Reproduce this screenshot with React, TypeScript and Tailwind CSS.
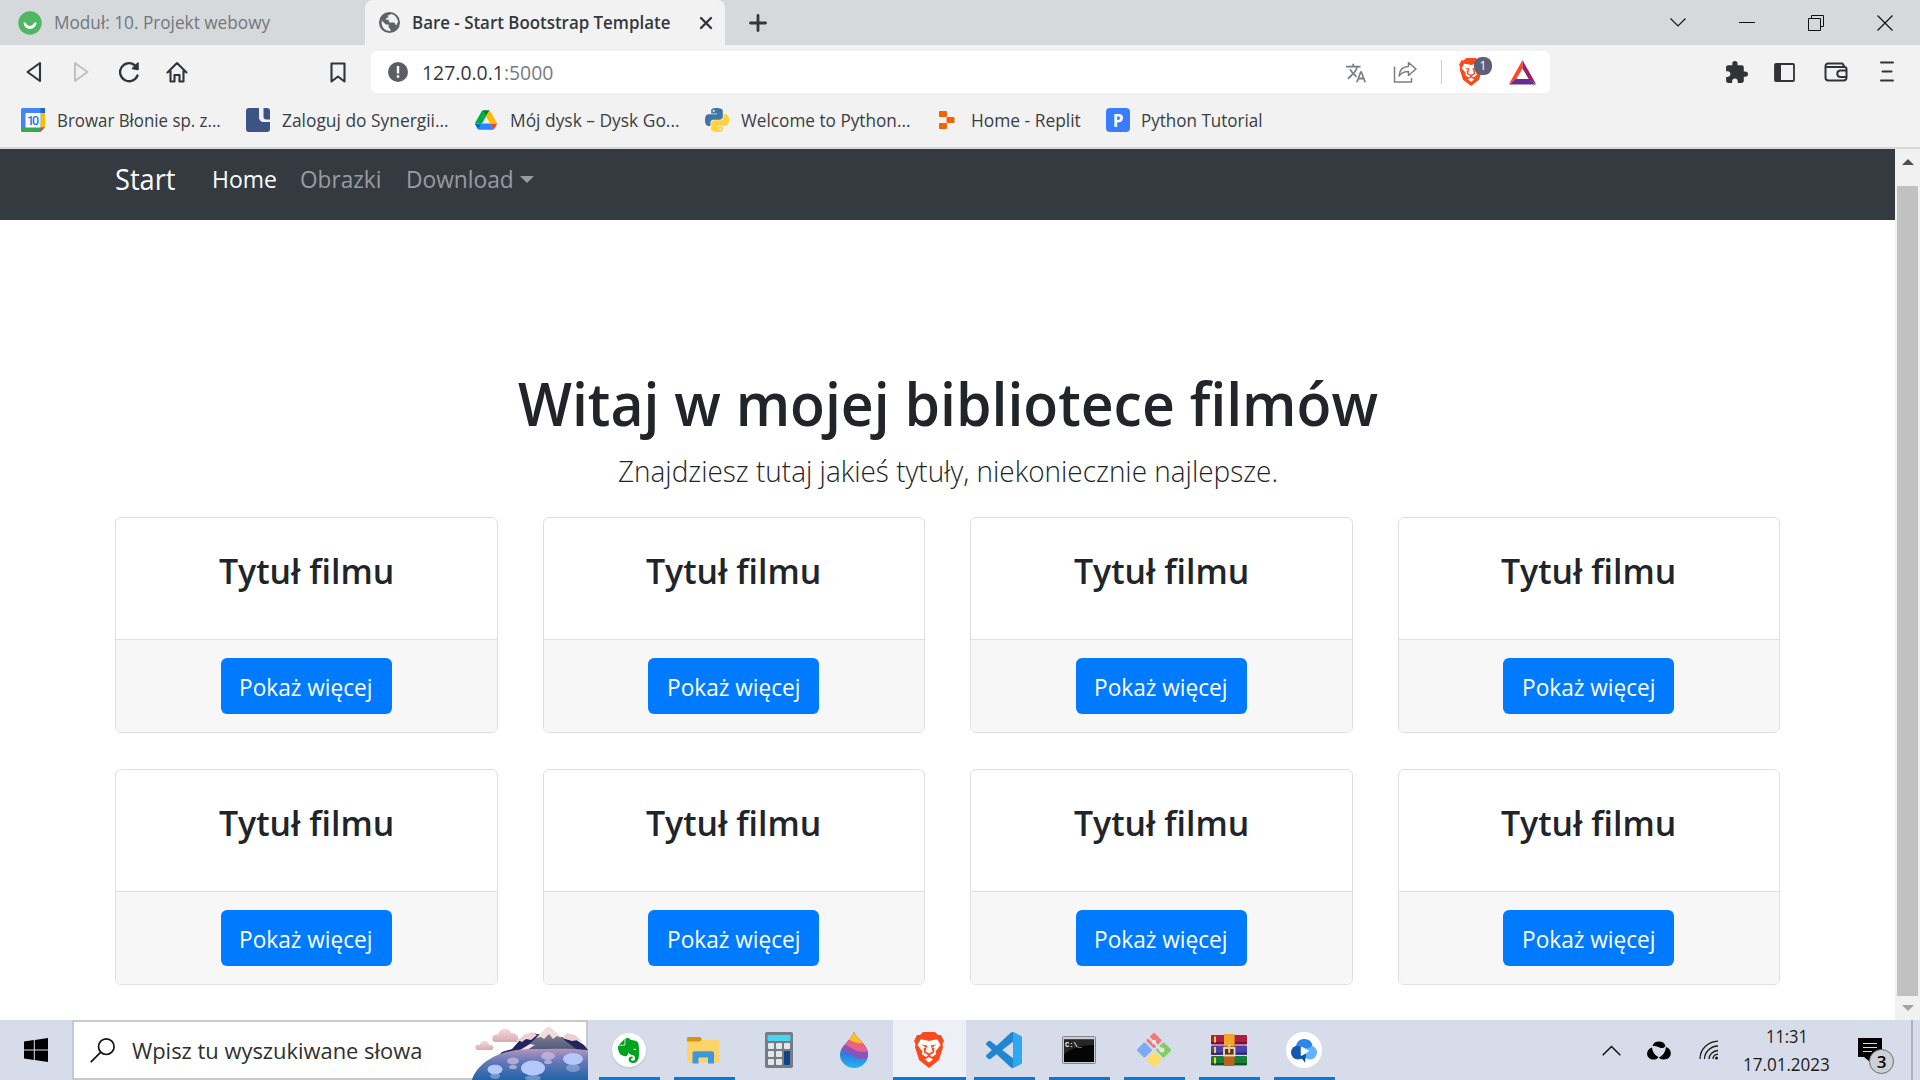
import { useLayoutEffect, useRef, useState } from 'react';
import type { ReactNode } from 'react';
import { SiEvernote } from 'react-icons/si';
import { MdExtension, MdTranslate } from 'react-icons/md';

/* Single-line label condensed or widened to occupy exactly `w` pixels. */
function Fit({ w, className = '', children }: { w: number; className?: string; children: ReactNode }) {
  const ref = useRef<HTMLSpanElement>(null);
  const [k, setK] = useState(1);
  useLayoutEffect(() => {
    if (ref.current) setK(w / ref.current.offsetWidth);
  }, [w]);
  return (
    <span className={`inline-block whitespace-nowrap ${className}`} style={{ width: w }}>
      <span ref={ref} className="inline-block origin-left whitespace-nowrap" style={{ transform: `scaleX(${k})` }}>
        {children}
      </span>
    </span>
  );
}

function BraveLion({ className }: { className: string }) {
  return (
    <svg className={className} viewBox="0 0 30 36" preserveAspectRatio="none">
      <path d="M9 0h12l3 3h3l3 6-1.500 3L29 15l-4 13L15 36 5 28 1 15l.5-3L0 9l3-6h3z" fill="#fb4a1f" />
      <path d="M6.500 7.500l4.500.5 4 1 4-1 4.500-.5 3 5.500-5 6.500.8 2.500-4.300 3-3-2.500-3 2.500-4.300-3 .8-2.500-5-6.500z" fill="#fff" />
      <path d="M7.500 12.500l6 1-1 2.500zM22.500 12.500l-6 1 1 2.500zM12.500 15.500l-1 4 3.500 2 3.500-2-1-4 3 .5-.5 4.500-3 2-2 1.200-2-1.200-3-2-.5-4.500z" fill="#fb4a1f" />
      <path d="M15 25l4 2.500-4 3-4-3z" fill="#fff" />
    </svg>
  );
}

function TabStrip() {
  return (
    <div className="flex h-[45px] bg-[#d5d9dc]">
      <div className="flex w-[365px] items-center pl-[18px]">
        <svg width="24" height="24" viewBox="0 0 24 24">
          <circle cx="12" cy="12" r="11.700" fill="#4fb761" />
          <path d="M5.500 11.500c.5 8.500 12.500 8.500 13 0-2.500-1-3 3.500-6.500 3.500s-4-4.500-6.500-3.500z" fill="#fff" />
        </svg>
        <Fit w={216} className="ml-3 text-[18px] text-[#72777b]">Moduł: 10. Projekt webowy</Fit>
      </div>
      <div className="flex w-[360px] items-center rounded-t-lg bg-[#f2f2f2] pl-[13px]">
        <svg width="23" height="23" viewBox="0 0 24 24">
          <circle cx="12" cy="12" r="11" fill="#5f6368" />
          <path d="M4 10l4 4h3v3l2 2v2C7 21 3 17 4 10zM10 5l4-2c4 1 6 4 7 8l-2 4-2-3h-5l-1-3h-3l1-2h2z" fill="#f2f2f2" />
        </svg>
        <Fit w={258} className="ml-[11px] text-[18px] font-semibold text-[#34383c]">Bare - Start Bootstrap Template</Fit>
        <svg className="ml-[29px]" width="14" height="14" viewBox="0 0 14 14" stroke="#33373a" strokeWidth="2.400" strokeLinecap="round">
          <path d="M2 2l10 10M12 2L2 12" />
        </svg>
      </div>
      <div className="flex flex-1 items-center">
        <svg className="ml-6" width="18" height="18" viewBox="0 0 18 18" stroke="#33373a" strokeWidth="2.800" strokeLinecap="round">
          <path d="M9 1.500v15M1.500 9h15" />
        </svg>
      </div>
      <div className="flex items-center gap-[53px] pr-[27px] text-black">
        <svg width="16" height="16" viewBox="0 0 16 16" fill="none" stroke="#111" strokeWidth="1.100"><path d="M.5 3.500L8 11l7.500-7.500" /></svg>
        <svg width="16" height="16" viewBox="0 0 16 16"><path d="M0 7h16v1H0z" fill="#111" /></svg>
        <svg width="16" height="16" viewBox="0 0 16 16" fill="none" stroke="#111"><path d="M.5 3.500h12v12h-12zM3.500 3.500v-3h12v11h-3" /></svg>
        <svg width="16" height="16" viewBox="0 0 16 16" stroke="#111" strokeWidth="1.200"><path d="M.5.5l15 15M15.500.5l-15 15" /></svg>
      </div>
    </div>
  );
}

function Toolbar() {
  return (
    <div className="flex h-[54px] items-center bg-[#f2f2f2]">
      <div className="flex w-[371px] items-center pl-[24px]">
        <svg width="20" height="22" viewBox="0 0 20 22" fill="none" stroke="#303437" strokeWidth="2.100" strokeLinejoin="round"><path d="M16 2v18L3.500 11z" /></svg>
        <svg className="ml-[28px]" width="20" height="22" viewBox="0 0 20 22" fill="none" stroke="#bfc1c3" strokeWidth="2.100" strokeLinejoin="round"><path d="M3 2v18l12.500-9z" /></svg>
        <svg className="ml-[26px]" width="22" height="22" viewBox="0 0 22 22" fill="none" stroke="#303437" strokeWidth="2.300" strokeLinecap="round">
          <path d="M19.500 14.500A9 9 0 1 1 16.500 4" />
          <path d="M14.500 7.500L20 2v6.500z" fill="#303437" strokeWidth="1.500" strokeLinejoin="round" />
        </svg>
        <svg className="ml-[26px]" width="22" height="22" viewBox="0 0 22 22" fill="none" stroke="#303437" strokeWidth="2.100" strokeLinecap="round" strokeLinejoin="round">
          <path d="M1.500 11.500L11 2l9.500 9.500M4.500 9.500V20.500H8.500V14h5v6.500h4V9.500" />
        </svg>
        <svg className="ml-[141px]" width="18" height="22" viewBox="0 0 18 22" fill="none" stroke="#303437" strokeWidth="2.100" strokeLinejoin="round"><path d="M2.500 2.500h13v18L9 15.500l-6.500 5z" /></svg>
      </div>
      <div className="flex h-[42px] w-[1179px] items-center rounded-md bg-white pl-[17px]">
        <svg width="20" height="20" viewBox="0 0 20 20"><circle cx="10" cy="10" r="10" fill="#5b5f63" /><path d="M8.800 4h2.400v7.500H8.800zM8.800 13.300h2.400v2.400H8.800z" fill="#fff" /></svg>
        <Fit w={131} className="ml-[14px] pt-px text-[20px] text-[#34383c]">127.0.0.1<span className="text-[#777b7f]">:5000</span></Fit>
        <MdTranslate className="ml-[792px] mt-px h-[22px] w-[22px] text-[#7b7d80]" />
        <svg className="ml-[26px]" width="24" height="22" viewBox="0 0 24 22" fill="none" stroke="#7b7d80" strokeWidth="1.500" strokeLinejoin="round">
          <path d="M1.500 5.500v15.500h17v-4M6 15c.5-6 3.500-9.500 9.500-9.500V1.500l7.500 6.500-7.500 6.500V10.500c-4 0-7 1-9.500 4.500z" />
        </svg>
        <div className="ml-[24px] h-6 w-px bg-[#cfcfcf]" />
        <div className="relative ml-[17px] h-[28px] w-[34px]">
          <BraveLion className="h-[28px] w-[24px]" />
          <div className="absolute left-[15px] top-[-1px] flex h-[18px] w-[18px] items-center justify-center rounded-[8px] bg-[#5e6174] text-[12px] leading-none text-white">1</div>
        </div>
        <svg className="ml-[16px]" width="27" height="25" viewBox="0 0 27 25">
          <path d="M13.500 0L0 24l7-4.500 6.500-11z" fill="#ff4724" />
          <path d="M13.500 0L27 24l-7-4.500-6.500-11z" fill="#9e1f63" />
          <path d="M0 24.500h27l-7-5.500H7z" fill="#662d91" />
        </svg>
      </div>
      <div className="flex flex-1 items-center justify-end pr-[26px] text-[#303437]">
        <MdExtension className="h-[25px] w-[25px]" />
        <svg className="ml-[25px]" width="21" height="19" viewBox="0 0 21 19"><rect x="1" y="1" width="19" height="17" rx="1" fill="none" stroke="#303437" strokeWidth="1.800" /><path d="M1 1h6v17H1z" fill="#303437" /></svg>
        <svg className="ml-[29px]" width="24" height="20" viewBox="0 0 24 20" fill="none" stroke="#303437" strokeWidth="2" strokeLinejoin="round">
          <path d="M1.500 4v11.500a3 3 0 0 0 3 3h15a3 3 0 0 0 3-3V7a2 2 0 0 0-2-2h-18a1 1 0 0 1-1-1 2.500 2.500 0 0 1 2.500-2.500h14.500L20.500 5M22 8.500h-6a3.300 3.300 0 0 0 0 6.500h6" />
        </svg>
        <svg className="ml-[32px]" width="14" height="22" viewBox="0 0 14 22" stroke="#303437" strokeWidth="2" strokeLinecap="round"><path d="M1 1.500h12M2.500 10.500h9M1 19.500h12" /></svg>
      </div>
    </div>
  );
}

const CalendarIcon = () => (
  <svg width="24" height="24" viewBox="0 0 24 24">
    <rect width="24" height="24" rx="1.500" fill="#4285f4" />
    <path d="M19.500 0H24v5h-4.500z" fill="#1967d2" />
    <path d="M19.500 5H24v14.500h-4.500z" fill="#fbbc04" />
    <path d="M0 19.500h19.500V24H1.500L0 22.500z" fill="#34a853" />
    <path d="M19.500 19.500H24L19.500 24z" fill="#ea4335" />
    <path d="M24 19.500V24h-4.500z" fill="#f2f2f2" />
    <path d="M4.500 5h15v14.500h-15z" fill="#fff" />
    <text x="12" y="16.800" textAnchor="middle" fontSize="12.500" fontFamily="Roboto, sans-serif" fontWeight="500" fill="#1a73e8" textLength="12">10</text>
  </svg>
);

const SynergiaIcon = () => (
  <svg width="24" height="24" viewBox="0 0 24 24">
    <path d="M3 0h10v9c0 3 2 5 5 5h6v7a3 3 0 0 1-3 3H3a3 3 0 0 1-3-3V3a3 3 0 0 1 3-3z" fill="#3c5484" />
    <path d="M17.500 0H21a3 3 0 0 1 3 3v8.500h-4c-1.500 0-2.500-1-2.500-2.500z" fill="#3c5484" />
  </svg>
);

const DriveIcon = () => (
  <svg width="22" height="20" viewBox="0 0 87.300 78">
    <path d="M6.600 66.850l3.850 6.650c.8 1.400 1.950 2.500 3.300 3.300L27.500 53H0c0 1.550.4 3.100 1.200 4.500z" fill="#0066da" />
    <path d="M43.650 25L29.900 1.200c-1.350.8-2.500 1.900-3.300 3.300L1.200 48.500A9 9 0 0 0 0 53h27.500z" fill="#00ac47" />
    <path d="M73.550 76.800c1.350-.8 2.500-1.900 3.300-3.300l9.250-16c.8-1.400 1.200-2.950 1.200-4.500H59.800l5.850 11.500z" fill="#ea4335" />
    <path d="M43.650 25L57.400 1.200C56.050.4 54.500 0 52.900 0H34.400c-1.600 0-3.150.45-4.500 1.200z" fill="#00832d" />
    <path d="M59.800 53H27.500L13.750 76.800c1.350.8 2.900 1.200 4.500 1.200h50.800c1.600 0 3.150-.45 4.500-1.200z" fill="#2684fc" />
    <path d="M73.400 26.500L60.700 4.500c-.8-1.400-1.950-2.500-3.300-3.300L43.650 25 59.800 53h27.450c0-1.550-.4-3.100-1.200-4.500z" fill="#ffba00" />
  </svg>
);

const PythonIcon = () => (
  <svg width="24" height="24" viewBox="0 0 24 24">
    <path fill="#3f76a5" d="M14.250.18l.9.2.73.26.59.3.45.32.34.34.25.34.16.33.1.3.04.26.02.2-.01.13V8.5l-.05.63-.13.55-.21.46-.26.38-.3.31-.33.25-.35.19-.35.14-.33.1-.3.07-.26.04-.21.02H8.77l-.69.05-.59.14-.5.22-.41.27-.33.32-.27.35-.2.36-.15.37-.1.35-.07.32-.04.27-.02.21v3.060H3.170l-.21-.03-.28-.07-.32-.12-.35-.18-.36-.26-.36-.36-.35-.46-.32-.59-.28-.73-.21-.88-.14-1.050-.05-1.230.06-1.220.16-1.040.24-.87.32-.71.36-.57.4-.44.42-.33.42-.24.4-.16.36-.1.32-.05.24-.01h.16l.06.01h8.160v-.83H6.180l-.01-2.750-.02-.37.05-.34.11-.31.17-.28.25-.26.31-.23.38-.2.44-.18.51-.15.58-.12.64-.1.71-.06.77-.04.84-.02 1.270.05zm-6.300 1.980l-.23.33-.08.41.08.41.23.34.33.22.41.09.41-.09.33-.22.23-.34.08-.41-.08-.41-.23-.33-.33-.22-.41-.09-.41.09z" />
    <path fill="#fcd33f" d="M21.040 6.110l.28.06.32.12.35.18.36.27.36.35.35.47.32.59.28.73.21.88.14 1.040.05 1.230-.06 1.230-.16 1.040-.24.86-.32.71-.36.57-.4.45-.42.33-.42.24-.4.16-.36.09-.32.05-.24.02-.16-.01h-8.220v.82h5.840l.01 2.760.02.36-.05.34-.11.31-.17.29-.25.25-.31.24-.38.2-.44.17-.51.15-.58.13-.64.09-.71.07-.77.04-.84.01-1.270-.04-1.070-.14-.9-.2-.73-.25-.59-.3-.45-.33-.34-.34-.25-.34-.16-.33-.1-.3-.04-.25-.02-.2.01-.13v-5.340l.05-.64.13-.54.21-.46.26-.38.3-.32.33-.24.35-.2.35-.14.33-.1.3-.06.26-.04.21-.02.13-.01h5.840l.69-.05.59-.14.5-.21.41-.28.33-.32.27-.35.2-.36.15-.36.1-.35.07-.32.04-.28.02-.21V6.070h2.090l.14.01zm-6.470 14.250l-.23.33-.08.41.08.41.23.33.33.23.41.08.41-.08.33-.23.23-.33.08-.41-.08-.41-.23-.33-.33-.23-.41-.08-.41.08z" />
  </svg>
);

const ReplitIcon = () => (
  <svg width="16" height="18" viewBox="0 0 16 18" fill="#f26207">
    <rect width="8" height="6" rx="1" />
    <rect x="7.500" y="6" width="8" height="6" rx="1" />
    <rect y="12" width="8" height="6" rx="1" />
  </svg>
);

const ProgramizIcon = () => (
  <div className="flex h-6 w-6 items-center justify-center rounded-sm bg-[#3b7bfd] text-[17px] font-bold leading-none text-white">P</div>
);

const bookmarks = [
  { icon: <CalendarIcon />, label: 'Browar Błonie sp. z...', box: 'w-[36px]', w: 164, gap: 'mr-[25px]' },
  { icon: <SynergiaIcon />, label: 'Zaloguj do Synergii...', box: 'w-[36px]', w: 167, gap: 'mr-[26px]' },
  { icon: <DriveIcon />, label: 'Mój dysk – Dysk Go...', box: 'w-[35px]', w: 170, gap: 'mr-[25px]' },
  { icon: <PythonIcon />, label: 'Welcome to Python...', box: 'w-[36px]', w: 169, gap: 'mr-[29px]' },
  { icon: <ReplitIcon />, label: 'Home - Replit', box: 'w-[32px]', w: 110, gap: 'mr-[25px]' },
  { icon: <ProgramizIcon />, label: 'Python Tutorial', box: 'w-[35px]', w: 122, gap: '' },
];

function Bookmarks() {
  return (
    <div className="flex h-[50px] items-center border-b-2 border-[#d5d9dc] bg-[#f2f2f2] pb-[6px] pl-[21px] text-[18px] text-[#3a3e42]">
      {bookmarks.map((b) => (
        <div key={b.label} className={`flex items-center ${b.gap}`}>
          <div className={`flex ${b.box}`}>{b.icon}</div>
          <Fit w={b.w}>{b.label}</Fit>
        </div>
      ))}
    </div>
  );
}

function Navbar() {
  return (
    <nav className="flex h-[71px] items-start bg-[#343a40] pl-[115px] text-[24px] text-[#999c9f]">
      <div className="flex h-[60px] items-center">
        <Fit w={61} className="text-[29px] text-white">Start</Fit>
        <Fit w={65} className="ml-[36px] text-white">Home</Fit>
        <Fit w={81} className="ml-[23px]">Obrazki</Fit>
        <Fit w={108} className="ml-[25px]">Download</Fit>
        <div className="ml-[6px] h-0 w-0 border-x-[7px] border-t-[7px] border-x-transparent border-t-[#999c9f]" />
      </div>
    </nav>
  );
}

function Card() {
  return (
    <div className="flex h-[216px] flex-col overflow-hidden rounded-md border border-[#dfdfdf] bg-white">
      <div className="flex h-[121px] justify-center pt-[30px]">
        <Fit w={175} className="h-[46px] text-[35px] font-semibold leading-[46px]">Tytuł filmu</Fit>
      </div>
      <div className="flex flex-1 items-center justify-center border-t border-[#dfdfdf] bg-[#f7f7f7]">
        <button className="h-[56px] w-[171px] rounded-md bg-[#007bff] pt-px text-[23.500px] leading-[56px] text-white">
          <Fit w={134}>Pokaż więcej</Fit>
        </button>
      </div>
    </div>
  );
}

function Page() {
  return (
    <div className="flex h-[871px]">
      <div className="w-[1895px] bg-white text-[#212529]">
        <Navbar />
        <main className="mx-auto flex w-[1665px] flex-col items-center pt-[147px]">
          <h1 className="text-[59px] font-semibold leading-[72px]"><Fit w={860}>Witaj w mojej bibliotece filmów</Fit></h1>
          <p className="mt-[9px] text-[29.500px] font-light leading-[45px]"><Fit w={660}>Znajdziesz tutaj jakieś tytuły, niekoniecznie najlepsze.</Fit></p>
          <div className="mt-[24px] grid w-full grid-cols-4 gap-x-[45px] gap-y-[36px]">
            {Array.from({ length: 8 }, (_, i) => <Card key={i} />)}
          </div>
        </main>
      </div>
      <div className="flex w-[25px] flex-col items-center bg-[#f1f1f1] pt-[10px]">
        <div className="h-0 w-0 border-x-[6px] border-b-[6px] border-x-transparent border-b-[#505050]" />
        <div className="mt-[21px] h-[810px] w-[21px] bg-[#c1c1c1]" />
        <div className="mt-[9px] h-0 w-0 border-x-[6px] border-t-[6px] border-x-transparent border-t-[#a3a3a3]" />
      </div>
    </div>
  );
}

const Landscape = () => (
  <svg width="116" height="58" viewBox="0 0 116 58">
    <defs>
      <linearGradient id="lake" x1="0" y1="0" x2="0" y2="1">
        <stop offset="0" stopColor="#b597bd" />
        <stop offset=".4" stopColor="#6678b8" />
        <stop offset="1" stopColor="#1f64a8" />
      </linearGradient>
      <linearGradient id="peak" x1="0" y1="0" x2="0" y2="1">
        <stop offset="0" stopColor="#9a8fa5" />
        <stop offset="1" stopColor="#4b5573" />
      </linearGradient>
      <linearGradient id="cloud" x1="0" y1="0" x2="0" y2="1">
        <stop offset="0" stopColor="#f3dcdc" />
        <stop offset="1" stopColor="#d9a9b3" />
      </linearGradient>
    </defs>
    <path d="M22 20c-4-4 0-9 4-7 1-8 12-8 13-2 6-1 9 5 6 9z" fill="url(#cloud)" />
    <path d="M5 28c-4-3 0-7 3-5 1-6 9-5 9 0 4-1 6 3 3 5z" fill="url(#cloud)" />
    <path d="M22 38l8-8 10-3 8-9 12-7 20 4 20 0 12 8 4 5v8H22z" fill="#20265a" />
    <path d="M46 18l6-5 8-3 5 3-6 5-5-1-4 3zM90 16l5-5 8 2 9 8-6-3-6 1z" fill="#ead0d2" />
    <path d="M50 29L64 16 77 5l14 12 16 12z" fill="url(#peak)" />
    <path d="M64 16L74 6l4-1 12 11-5-2-4 3-4-5-5 5-3-2z" fill="#f2dcd9" />
    <path d="M48 28l10-6 5 1-8 5z" fill="#f3e3e4" />
    <path d="M0 58C4 44 22 27 60 27c20 0 36-1 56 1v30z" fill="url(#lake)" />
    <g fill="#b4c8fb">
      <ellipse cx="61" cy="46" rx="12" ry="7.500" />
      <ellipse cx="101" cy="37" rx="10" ry="6" />
      <ellipse cx="23" cy="47.500" rx="7.500" ry="4.800" />
    </g>
    <g fill="#cbbbe0" opacity=".75">
      <ellipse cx="76" cy="34" rx="7" ry="4" />
      <ellipse cx="41" cy="39" rx="6" ry="3.500" />
      <ellipse cx="76" cy="40" rx="4" ry="2" />
      <ellipse cx="41" cy="45" rx="4" ry="2" />
    </g>
    <g fill="#a9c3ec" opacity=".5">
      <ellipse cx="61" cy="56" rx="8" ry="3" />
      <ellipse cx="101" cy="46" rx="7" ry="4" />
      <ellipse cx="23" cy="54" rx="5" ry="3" />
    </g>
  </svg>
);

const EvernoteApp = () => (
  <div className="flex h-[34px] w-[34px] items-center justify-center rounded-full bg-white shadow-sm">
    <SiEvernote className="h-[25px] w-[25px] text-[#00a31f]" />
  </div>
);

const ExplorerApp = () => (
  <svg width="33" height="28" viewBox="0 0 33 28">
    <path d="M1.500 1h11a2 2 0 0 1 2 2v4H0V2.500A1.500 1.500 0 0 1 1.500 1z" fill="#d9940f" />
    <path d="M0 5.500h12l4-1.500h15a1.500 1.500 0 0 1 1.500 1.500V25a1.500 1.500 0 0 1-1.500 1.500H1.500A1.500 1.500 0 0 1 0 25z" fill="#fcd469" />
    <path d="M5.500 27.500V17a1.800 1.800 0 0 1 1.800-1.800h18A1.800 1.800 0 0 1 27 17v10.500h-6v-6h-9.500v6z" fill="#3c97dd" />
  </svg>
);

const CalculatorApp = () => (
  <svg width="28" height="36" viewBox="0 0 28 36">
    <rect width="28" height="36" rx="1.800" fill="#747c85" />
    <rect x="2.500" y="3" width="23" height="6" rx=".8" fill="#4bd3f2" />
    <g fill="#e5e7ea">
      <rect x="3" y="11" width="6" height="6" rx="1" /><rect x="11" y="11" width="6" height="6" rx="1" /><rect x="19" y="11" width="6" height="6" rx="1" />
      <rect x="3" y="19" width="6" height="6" rx="1" /><rect x="11" y="19" width="6" height="6" rx="1" />
      <rect x="3" y="27" width="6" height="6" rx="1" /><rect x="11" y="27" width="6" height="6" rx="1" />
    </g>
    <rect x="19" y="19" width="6" height="14" rx="1" fill="#0c4487" />
  </svg>
);

const PaintApp = () => (
  <svg width="28" height="36" viewBox="0 0 28 36">
    <defs>
      <clipPath id="drop"><path d="M14 0c3 8 14 12 14 22.500A14 13.500 0 0 1 0 22.500C0 14 11 9 14 0z" /></clipPath>
      <linearGradient id="dropBlue" x1="0" y1="0" x2="0" y2="1"><stop offset=".6" stopColor="#2c7be0" /><stop offset="1" stopColor="#22b5f3" /></linearGradient>
    </defs>
    <g clipPath="url(#drop)">
      <path d="M0 0h28v36H0z" fill="url(#dropBlue)" />
      <path d="M0 19c9-2 14 12 28 7V0H0z" fill="#8a54bd" />
      <path d="M0 13c10-2 14 10 28 6V0H0z" fill="#ec5f86" />
      <path d="M8 7c5 3 10 5 16 4V0H8z" fill="#ffbf1f" />
    </g>
  </svg>
);

const BraveApp = () => <BraveLion className="h-9 w-[30px]" />;

const CodeApp = () => (
  <svg width="36" height="36" viewBox="0 0 24 24">
    <path fill="#1f86cf" d="M23.150 2.587L18.210.21a1.494 1.494 0 0 0-1.705.29l-9.460 8.630-4.120-3.128a.999.999 0 0 0-1.276.057L.327 7.261A1 1 0 0 0 .326 8.740L3.899 12 .326 15.260a1 1 0 0 0 .001 1.479L1.650 17.940a.999.999 0 0 0 1.276.057l4.120-3.128 9.460 8.630a1.492 1.492 0 0 0 1.704.29l4.942-2.377A1.500 1.500 0 0 0 24 20.060V3.939a1.500 1.500 0 0 0-.85-1.352zm-5.146 14.861L10.826 12l7.178-5.448v10.896z" />
    <path fill="#2fa8f0" d="M23.150 2.587L18.210.21c.4.400-.206.900-.206 1.400v20.800c0 .5.200 1 .206 1.400l4.942-2.398A1.500 1.500 0 0 0 24 20.060V3.939a1.500 1.500 0 0 0-.85-1.352z" />
  </svg>
);

const TerminalApp = () => (
  <svg width="34" height="28" viewBox="0 0 34 28">
    <rect x=".5" y=".5" width="33" height="27" rx="1" fill="#c9ccd0" stroke="#83878b" />
    <path d="M2 3.500h30V26H2z" fill="#050505" />
    <path d="M2 3.500h30V9C20 9 10 12 2 18z" fill="#262626" />
    <text x="3" y="11" fontFamily="Liberation Mono, monospace" fontSize="7" fontWeight="700" fill="#fff">C:\_</text>
  </svg>
);

const GitApp = () => (
  <svg width="36" height="36" viewBox="0 0 36 36">
    <g transform="rotate(45 18 18)">
      <rect x="5.500" y="5.500" width="11.500" height="11.500" rx="1.500" fill="#f4777b" />
      <rect x="19" y="5.500" width="11.500" height="11.500" rx="1.500" fill="#84cc63" />
      <rect x="5.500" y="19" width="11.500" height="11.500" rx="1.500" fill="#7caaf6" />
      <rect x="19" y="19" width="11.500" height="11.500" rx="1.500" fill="#fbdd68" />
    </g>
    <g stroke="#dfe5ea" strokeWidth="2" fill="#f3f5f7">
      <path d="M11 4l15 14M18 10l7 9" fill="none" />
      <circle cx="18" cy="10" r="1.300" /><circle cx="26" cy="18" r="1.500" />
    </g>
  </svg>
);

const RarApp = () => (
  <svg width="36" height="32" viewBox="0 0 36 32">
    <rect y="1" width="36" height="9.500" rx="1" fill="#b01c43" />
    <rect y="11.500" width="36" height="9.500" rx="1" fill="#4a3fae" />
    <rect y="22" width="36" height="9.500" rx="1" fill="#187e37" />
    <path d="M0 8h36v2H0zM0 18.500h36v2H0zM0 29h36v2H0z" fill="#000" opacity=".35" />
    <path d="M3 2.500h2v6H3zM3 13h2v6H3zM3 23.500h2v6H3z" fill="#fbd22d" />
    <rect x="13" y="0" width="10.500" height="32" rx="1" fill="#b5651d" />
    <rect x="13" y="0" width="10.500" height="12" rx="1" fill="#f0a52b" />
    <rect x="13" y="14" width="10.500" height="7.500" fill="#5c3216" stroke="#f0dcc0" strokeWidth="1.800" />
    <path d="M17.200 10h2v9h-2z" fill="#eec58a" />
  </svg>
);

const SwirlApp = () => (
  <svg width="36" height="36" viewBox="0 0 36 36">
    <circle cx="18" cy="18" r="18" fill="#fff" />
    <circle cx="24" cy="20.500" r="7" fill="#62b3ff" />
    <circle cx="12" cy="20.500" r="7" fill="#1257b3" />
    <path d="M10 14a8.500 8.500 0 0 1 16.500-1c-2 3-5 4.500-8.500 3-3-1.300-5.500-2.500-8-2z" fill="#2d86ec" />
    <path d="M14 24l6-2-1 9c-1-3-4-4-5-7z" fill="#0f4fa8" />
    <path d="M15.500 15.500l6.500 3.500-6.500 4z" fill="#fff" stroke="#fff" strokeWidth="1.500" strokeLinejoin="round" />
  </svg>
);

const apps: { icon: ReactNode; running: boolean; active?: boolean }[] = [
  { icon: <EvernoteApp />, running: true },
  { icon: <ExplorerApp />, running: true },
  { icon: <CalculatorApp />, running: false },
  { icon: <PaintApp />, running: false },
  { icon: <BraveApp />, running: true, active: true },
  { icon: <CodeApp />, running: true },
  { icon: <TerminalApp />, running: true },
  { icon: <GitApp />, running: true },
  { icon: <RarApp />, running: true },
  { icon: <SwirlApp />, running: true },
];

function Taskbar() {
  return (
    <div className="flex h-[60px] bg-[#d6dce9]">
      <div className="flex w-[72px] items-center justify-center">
        <svg width="24" height="24" viewBox="0 0 24 24"><path d="M0 3.400L9.800 2v9.500H0zM10.800 1.900L24 0v11.500H10.800zM0 12.500h9.800V22L0 20.600zM10.800 12.500H24V24l-13.200-1.900z" /></svg>
      </div>
      <div className="flex w-[516px] items-center border-2 border-[#c6c9cd] bg-white pl-4">
        <svg width="25" height="25" viewBox="0 0 25 25" fill="none" stroke="#111" strokeWidth="1.700"><circle cx="16.300" cy="8.700" r="7.800" /><path d="M10.800 14.200L.8 24.200" /></svg>
        <Fit w={290} className="ml-[17px] pt-[2px] text-[22.500px] text-[#303030]">Wpisz tu wyszukiwane słowa</Fit>
        <div className="-mr-[2px] ml-auto h-[56px]"><Landscape /></div>
      </div>
      <div className="flex pl-[4px]">
        {apps.map((a, i) => (
          <div key={i} className="flex w-[75px] justify-center">
            <div className={`flex h-full flex-col items-center ${a.active ? 'w-[73px] bg-[#eef0f7]' : 'w-[61px]'}`}>
              <div className="flex h-[57px] items-center justify-center pr-[2px] pt-[3px]">{a.icon}</div>
              {a.running && <div className="h-[3px] w-full bg-[#0f78cc]" />}
            </div>
          </div>
        ))}
      </div>
      <div className="flex flex-1 items-center justify-end">
        <svg width="19" height="11" viewBox="0 0 19 11" fill="none" stroke="#111" strokeWidth="1.500"><path d="M.7 10.300L9.500 1.500l8.800 8.800" /></svg>
        <svg className="ml-[26px]" width="24" height="20" viewBox="0 0 24 20">
          <path d="M5.500 6a6.800 6.300 0 0 1 13 0c-2 2.500-4 2.500-6 1.500-2-1.200-5-1.500-7-1.500z" />
          <path d="M5 7.500c-6 2-6.500 9-1.500 11.500 3 1.200 7 .5 8-2-3.500-1.500-6-5-6.500-9.500z" />
          <path d="M19 7c6 2 6.500 9.500 1 12-4 1.200-7.500 0-8-1.500C16 15.500 18.500 12 19 7z" />
        </svg>
        <svg className="ml-[28px]" width="20" height="20" viewBox="0 0 20 20" fill="none" stroke="#1b1b1b" strokeWidth="1.300">
          <path d="M1 19C1 9 9 1.500 19 1.200M5.500 19C5.500 12 11.500 6.200 19 6M10 19c0-4.500 4-8.200 9-8.500M14 19c0-2.500 2-4.500 5-4.800" />
          <circle cx="17.500" cy="18" r="1.500" fill="#1b1b1b" stroke="none" />
        </svg>
        <div className="ml-[24px] flex w-[87px] flex-col items-center text-[18px] leading-[28px] text-[#1b1b1b]">
          <Fit w={42}>11:31</Fit>
          <Fit w={87}>17.01.2023</Fit>
        </div>
        <div className="relative ml-[28px] mt-[13px] h-[38px] w-[36px]">
          <svg width="24" height="24" viewBox="0 0 24 24"><path d="M0 0h24v19H12v5l-6-5H0z" /><path d="M5 5.500h14M5 9.500h14M5 13.500h9" stroke="#d6dce9" strokeWidth="1.200" /></svg>
          <div className="absolute left-[11px] top-[11px] flex h-[25px] w-[25px] items-center justify-center rounded-full border border-[#6b6b6b] bg-[#cdd0d6] text-[17px] font-semibold leading-none text-black">3</div>
        </div>
        <div className="ml-[17px] h-full w-[2px] bg-[#aab0bd]" />
        <div className="w-[7px]" />
      </div>
    </div>
  );
}

export default function App() {
  return (
    <div className="h-[1080px] w-[1920px] overflow-hidden bg-white font-['Open_Sans','Noto_Sans',sans-serif]">
      <TabStrip />
      <Toolbar />
      <Bookmarks />
      <Page />
      <Taskbar />
    </div>
  );
}
